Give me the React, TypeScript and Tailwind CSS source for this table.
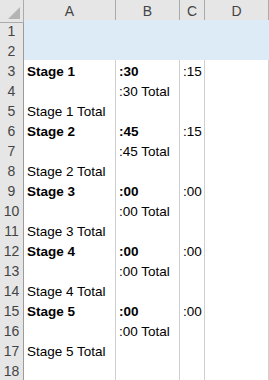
import React from 'react';

type Row = { a?: string; b?: string; c?: string; bold?: boolean };

const rows: Row[] = [
  {},
  {},
  { a: 'Stage 1', b: ':30', c: ':15', bold: true },
  { b: ':30 Total' },
  { a: 'Stage 1 Total' },
  { a: 'Stage 2', b: ':45', c: ':15', bold: true },
  { b: ':45 Total' },
  { a: 'Stage 2 Total' },
  { a: 'Stage 3', b: ':00', c: ':00', bold: true },
  { b: ':00 Total' },
  { a: 'Stage 3 Total' },
  { a: 'Stage 4', b: ':00', c: ':00', bold: true },
  { b: ':00 Total' },
  { a: 'Stage 4 Total' },
  { a: 'Stage 5', b: ':00', c: ':00', bold: true },
  { b: ':00 Total' },
  { a: 'Stage 5 Total' },
  {},
];

const cols = 'grid grid-cols-[24px_92px_64px_25px_1fr]';

export default function App() {
  return (
    <div className="w-[269px] h-[380px] overflow-hidden bg-white text-[13.5px] text-black" style={{ fontFamily: '"Liberation Sans", Arial, sans-serif' }}>
      {/* column headers */}
      <div className={`${cols} h-[20px] bg-[#e6e6e6] text-[#444] text-[14px]`}>
        <div className="relative border-r border-b border-[#ababab]">
          <div className="absolute right-[3px] bottom-[3px] w-0 h-0 border-l-[12px] border-l-transparent border-b-[12px] border-b-[#b4b4b4]" />
        </div>
        {['A', 'B', 'C', 'D'].map(l => (
          <div key={l} className="flex items-center justify-center pt-[1px] border-r border-b border-r-[#ababab] border-b-[#9b9b9b]">
            {l}
          </div>
        ))}
      </div>

      {rows.map((r, i) => {
        const blue = i < 2;
        const cell = blue
          ? 'bg-[#ddebf7]'
          : 'border-r border-b border-[#d0d0d0] bg-white';
        return (
          <div key={i} className={`${cols} h-[20px]`}>
            <div className="flex items-center justify-center pt-[1px] text-[14px] bg-[#e6e6e6] text-[#444] border-r border-b border-r-[#9b9b9b] border-b-[#ababab]">
              {i + 1}
            </div>
            <div className={`${cell} flex items-center pl-[3px] pt-[2px] whitespace-nowrap ${r.bold ? 'font-bold' : ''}`}>{r.a}</div>
            <div className={`${cell} flex items-center pl-[3px] pt-[2px] whitespace-nowrap ${r.bold ? 'font-bold' : ''}`}>{r.b}</div>
            <div className={`${cell} flex items-center pl-[3px] pt-[2px] whitespace-nowrap`}>{r.c}</div>
            <div className={`${cell}`} />
          </div>
        );
      })}
    </div>
  );
}
